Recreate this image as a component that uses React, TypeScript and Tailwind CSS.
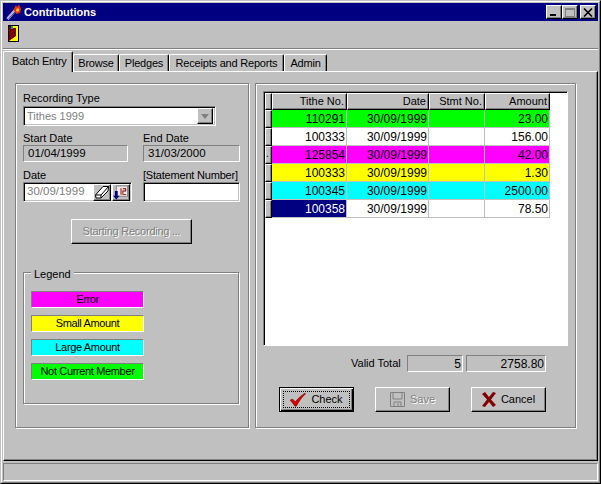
const sunken = "border border-t-[#808080] border-l-[#808080] border-r-white border-b-white";
const field = "border border-t-[#808080] border-l-[#808080] border-r-white border-b-white shadow-[inset_1px_1px_0_#000,inset_-1px_-1px_0_#c0c0c0]";
const raised = "border border-t-white border-l-white border-r-black border-b-black shadow-[inset_-1px_-1px_0_#808080]";
const etched = "border border-[#808080] shadow-[1px_1px_0_#fff,inset_1px_1px_0_#fff]";

type Row = { tithe: string; amount: string; color: string; first?: string; marker?: boolean };

const rows: Row[] = [
  { tithe: "110291", amount: "23.00", color: "bg-[#00ff00]" },
  { tithe: "100333", amount: "156.00", color: "bg-white" },
  { tithe: "125854", amount: "42.00", color: "bg-[#ff00ff]", marker: true },
  { tithe: "100333", amount: "1.30", color: "bg-[#ffff00]" },
  { tithe: "100345", amount: "2500.00", color: "bg-[#00ffff]" },
  { tithe: "100358", amount: "78.50", color: "bg-white", first: "bg-[#000080] text-white" },
];

const legend = [
  { label: "Error", color: "bg-[#ff00ff]" },
  { label: "Small Amount", color: "bg-[#ffff00]" },
  { label: "Large Amount", color: "bg-[#00ffff]" },
  { label: "Not Current Member", color: "bg-[#00ff00]" },
];

function Torch() {
  return (
    <svg width="16" height="16" viewBox="0 0 16 16" className="shrink-0">
      <path d="M1.5 15 L9 6.5" stroke="#b8b8e0" strokeWidth="3" />
      <path d="M2.5 15 L9 8" stroke="#404080" strokeWidth="1" />
      <path d="M7.5 6 L10 1 L11 3 L13 0.5 L15 5 L14 9 L10.5 10 Z" fill="#e83010" />
      <path d="M10 6.5 L11 4 L12 5 L13 4 L13 7 L11 8 Z" fill="#ffc020" />
    </svg>
  );
}

function Door() {
  return (
    <svg width="11" height="17" viewBox="0 0 11 17" className="block">
      <rect x="0.5" y="0.5" width="10" height="16" fill="#ffff00" stroke="#000" />
      <path d="M1 1 H4 V3 H8 V11 L1 16 Z" fill="#800000" />
      <rect x="3" y="1" width="2" height="3" fill="#00a0a0" />
      <rect x="6" y="7" width="1" height="2" fill="#000" />
    </svg>
  );
}

function Eraser() {
  return (
    <svg width="16" height="16" viewBox="0 0 16 16">
      <path d="M1.5 11 L9 2.5 H14.5 L14 7 L7 14 H2 Z" fill="#fff" stroke="#000" />
      <path d="M1.5 11 H7 L14.5 2.5 M7 11 V14" fill="none" stroke="#000" />
    </svg>
  );
}

function Calendar() {
  return (
    <svg width="17" height="17" viewBox="0 0 17 17">
      <rect x="3.5" y="1.5" width="12" height="11" fill="#f4e8e8" stroke="#808080" />
      <path d="M8 4 H9 V11 H8 Z M10.5 4 H14 V7.5 H11 V10 H14 V11 H10 V6.5 H13 V5 H10.5 Z" fill="#800000" />
      <path d="M2 7 H5 V12 H7 L3.5 16 L0 12 H2 Z" fill="#000080" />
    </svg>
  );
}

function CheckIcon() {
  return (
    <svg width="16" height="14" viewBox="0 0 18 16">
      <path d="M0 8 L3 7 L6 10 C9 6 13 3 17 0 L17.5 1 C13 5 10 10 7 15 L5.5 15 Z" fill="#e00000" stroke="#600000" strokeWidth="0.6" />
    </svg>
  );
}

function SaveIcon() {
  return (
    <svg width="15" height="15" viewBox="0 0 15 15">
      <path d="M0.5 0.5 H14.5 V14.5 H0.5 Z" fill="#c0c0c0" stroke="#808080" />
      <path d="M3 1 V7 H12 V1 M4 14 V10 H11 V14 M8 11 V14" fill="none" stroke="#808080" />
      <path d="M1 15.5 H15.5 V1" fill="none" stroke="#fff" />
    </svg>
  );
}

function CancelIcon() {
  return (
    <svg width="14" height="15" viewBox="0 0 14 15">
      <path d="M0 2 L3 0 L7 5 L11 0 L14 1 L9 7.5 L14 13 L11 15 L7 10 L3 15 L0 14 L5 7.5 Z" fill="#800000" />
    </svg>
  );
}

function Tab({ label, width, active }: { label: string; width: string; active?: boolean }) {
  if (active) {
    return (
      <div className={`${width} h-[21px] relative z-10 -mb-px bg-[#c0c0c0] border-t border-l border-r border-t-white border-l-white border-r-black shadow-[inset_-1px_0_0_#808080] rounded-t-[2px] whitespace-nowrap pl-[8px] pt-[2px] leading-[14px] tracking-[-0.2px]`}>
        {label}
      </div>
    );
  }
  return (
    <div className={`${width} h-[17px] bg-[#c0c0c0] border-t border-l border-r border-t-white border-l-white border-r-black shadow-[inset_-1px_0_0_#808080] rounded-t-[2px] whitespace-nowrap flex items-center justify-center tracking-[-0.2px]`}>
      {label}
    </div>
  );
}

function Caption({ text, className = "" }: { text: string; className?: string }) {
  return <div className={`h-[14px] leading-[14px] whitespace-nowrap ${className}`}>{text}</div>;
}

function ActionButton({ children, className = "" }: { children: React.ReactNode; className?: string }) {
  return <div className={`w-[75px] h-[25px] flex items-center justify-center gap-[5px] ${className}`}>{children}</div>;
}

export default function App() {
  return (
    <div className="w-[601px] h-[484px] bg-[#c0c0c0] text-black text-[11px] font-['Liberation_Sans',Arial,sans-serif] border border-t-[#c0c0c0] border-l-[#c0c0c0] border-r-black border-b-black overflow-hidden">
      <div className="h-full border border-t-white border-l-white border-r-[#808080] border-b-[#808080] p-px flex flex-col">
        {/* title bar */}
        <div className="h-[18px] bg-[#000080] flex items-center pl-[3px] pr-[2px] shrink-0">
          <Torch />
          <span className="ml-[2px] mt-px text-white font-bold text-[11px]">Contributions</span>
          <div className="ml-auto flex">
            <div className={`w-[16px] h-[14px] bg-[#c0c0c0] ${raised} flex items-end pl-[3px] pb-[2px]`}>
              <div className="w-[6px] h-[2px] bg-black" />
            </div>
            <div className={`w-[16px] h-[14px] bg-[#c0c0c0] ${raised} flex items-center justify-center`}>
              <div className="w-[10px] h-[9px] border border-[#808080] border-t-2" />
            </div>
            <div className={`w-[16px] h-[14px] ml-[2px] bg-[#c0c0c0] ${raised} flex items-center justify-center`}>
              <svg width="10" height="9" viewBox="0 0 10 9"><path d="M1 0.5 L9 8.5 M9 0.5 L1 8.5" stroke="#000" strokeWidth="1.6" /></svg>
            </div>
          </div>
        </div>

        {/* toolbar */}
        <div className="h-[28px] shrink-0 pl-[5px] pt-[4px] border-b border-b-[#808080] shadow-[0_1px_0_#fff]">
          <Door />
        </div>

        {/* tabs */}
        <div className="shrink-0 h-[22px] flex items-end">
          <Tab label="Batch Entry" width="w-[70px]" active />
          <Tab label="Browse" width="w-[46px]" />
          <Tab label="Pledges" width="w-[50px]" />
          <Tab label="Receipts and Reports" width="w-[115px]" />
          <Tab label="Admin" width="w-[43px]" />
        </div>

        {/* tab page */}
        <div className="h-[390px] shrink-0 border border-t-white border-l-white border-r-black border-b-black shadow-[inset_-1px_-1px_0_#808080] px-[11px] pt-[11px] flex gap-[6px]">
          {/* left panel */}
          <div className={`w-[234px] shrink-0 h-[345px] ${etched} pt-[7px] px-[7px]`}>
            <Caption text="Recording Type" className="mb-px" />
            <div className={`w-[193px] h-[20px] ${field} bg-white flex items-center text-[#808080] pl-[3px] pr-[2px]`}>
              Tithes 1999
              <div className={`ml-auto w-[16px] h-[16px] bg-[#c0c0c0] ${raised} flex items-center justify-center`}>
                <div className="w-0 h-0 border-x-[4px] border-x-transparent border-t-[5px] border-t-[#808080]" />
              </div>
            </div>

            <div className="flex mt-[5px]">
              <div className="w-[120px] shrink-0">
                <Caption text="Start Date" />
                <div className={`w-[105px] h-[17px] ${sunken} flex items-center pl-[4px] text-[11.5px]`}>01/04/1999</div>
              </div>
              <div className="w-[97px] shrink-0">
                <Caption text="End Date" />
                <div className={`w-[97px] h-[17px] ${sunken} flex items-center pl-[4px] text-[11.5px]`}>31/03/2000</div>
              </div>
            </div>

            <div className="flex mt-[6px]">
              <div className="w-[120px] shrink-0">
                <Caption text="Date" />
                <div className={`w-[109px] h-[20px] ${field} bg-white flex items-center text-[#808080] pl-[3px] text-[11.5px]`}>
                  30/09/1999
                  <div className={`ml-auto w-[18px] h-[17px] mr-px bg-[#c0c0c0] ${raised} flex items-center justify-center`}><Eraser /></div>
                  <div className={`w-[18px] h-[17px] mr-px bg-[#c0c0c0] ${raised} flex items-center justify-center`}><Calendar /></div>
                </div>
              </div>
              <div className="w-[97px] shrink-0">
                <Caption text="[Statement Number]" className="tracking-[-0.2px]" />
                <div className={`w-[97px] h-[20px] ${field} bg-white`} />
              </div>
            </div>

            <div className={`w-[121px] h-[25px] mt-[17px] ml-[48px] ${raised} flex items-center justify-center text-[#808080] tracking-[-0.25px] [text-shadow:1px_1px_0_#fff]`}>
              Starting Recording ...
            </div>

            <div className={`relative w-[216px] h-[132px] mt-[28px] ${etched} pt-[18px] pl-[7px]`}>
              <div className="absolute -top-[6px] left-[7px] bg-[#c0c0c0] px-[3px] h-[14px] leading-[14px]">Legend</div>
              <div className="flex flex-col gap-[7px]">
                {legend.map((item) => (
                  <div key={item.label} className={`w-[113px] h-[17px] ${item.color} ${sunken} flex items-center justify-center whitespace-nowrap tracking-[-0.35px]`}>
                    {item.label}
                  </div>
                ))}
              </div>
            </div>
          </div>

          {/* right panel */}
          <div className={`w-[321px] shrink-0 h-[345px] ${etched} pt-[7px] pl-[7px]`}>
            <div className="w-[305px] h-[255px] border border-t-[#808080] border-l-[#808080] border-r-white border-b-white bg-white">
              <div className="h-full border-t border-l border-t-black border-l-black">
                <div className="flex h-[17px]">
                  <div className={`w-[7px] bg-[#c0c0c0] ${raised}`} />
                  <div className={`w-[75px] bg-[#c0c0c0] ${raised} flex items-center justify-end pr-[2px]`}>Tithe No.</div>
                  <div className={`w-[82px] bg-[#c0c0c0] ${raised} flex items-center justify-end pr-[2px]`}>Date</div>
                  <div className={`w-[56px] bg-[#c0c0c0] ${raised} flex items-center justify-end pr-[2px]`}>Stmt No.</div>
                  <div className={`w-[65px] bg-[#c0c0c0] ${raised} flex items-center justify-end pr-[2px]`}>Amount</div>
                </div>
                {rows.map((row, i) => (
                  <div key={i} className="flex h-[18px] text-[12px]">
                    <div className={`w-[7px] bg-[#c0c0c0] ${raised} text-[10px] leading-[14px] overflow-hidden`}>{row.marker ? "." : ""}</div>
                    <div className={`w-[75px] ${row.first ?? row.color} border-r border-b border-[#c0c0c0] flex items-center justify-end pr-px`}>{row.tithe}</div>
                    <div className={`w-[82px] ${row.color} border-r border-b border-[#c0c0c0] flex items-center justify-end pr-px`}>30/09/1999</div>
                    <div className={`w-[56px] ${row.color} border-r border-b border-[#c0c0c0]`} />
                    <div className={`w-[65px] ${row.color} border-r border-b border-[#c0c0c0] flex items-center justify-end pr-px`}>{row.amount}</div>
                  </div>
                ))}
              </div>
            </div>

            <div className="flex items-center h-[17px] mt-[9px] pl-[88px]">
              <span className="w-[56px] whitespace-nowrap">Valid Total</span>
              <div className={`w-[56px] h-[17px] ${sunken} flex items-center justify-end pr-px text-[12px]`}>5</div>
              <div className={`w-[80px] h-[17px] ml-[3px] ${sunken} flex items-center justify-end pr-px text-[12px]`}>2758.80</div>
            </div>

            <div className="flex gap-[21px] mt-[15px] pl-[16px]">
              <ActionButton className="border border-black relative shadow-[inset_1px_1px_0_#fff,inset_-1px_-1px_0_#000,inset_-2px_-2px_0_#808080]">
                <div className="absolute inset-[3px] border border-dotted border-black" />
                <CheckIcon />
                <span>Check</span>
              </ActionButton>
              <ActionButton className={`${raised} text-[#808080] [text-shadow:1px_1px_0_#fff]`}>
                <SaveIcon />
                <span>Save</span>
              </ActionButton>
              <ActionButton className={raised}>
                <CancelIcon />
                <span>Cancel</span>
              </ActionButton>
            </div>
          </div>
        </div>

        {/* status bar */}
        <div className={`mt-[2px] h-[18px] shrink-0 ${sunken}`} />
      </div>
    </div>
  );
}
